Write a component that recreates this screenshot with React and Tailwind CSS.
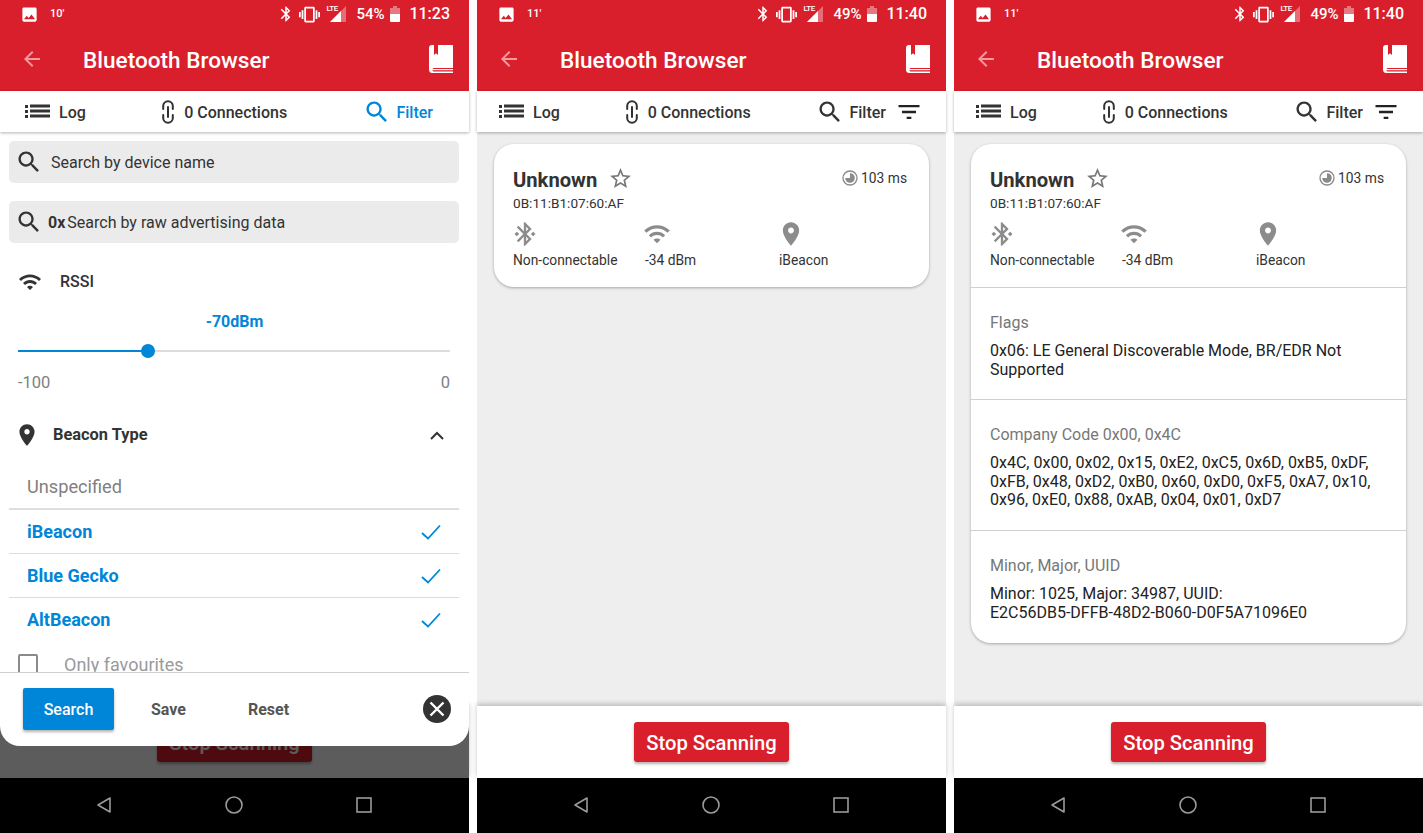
import React from "react";

const P = {
  bt: "M17.71 7.71L12 2h-1v7.59L6.41 5 5 6.41 10.59 12 5 17.59 6.41 19 11 14.41V22h1l5.71-5.71-4.3-4.29 4.3-4.29zM13 5.83l1.88 1.88L13 9.59V5.83zm1.88 10.46L13 18.17v-3.76l1.88 1.88z",
  btDots: "M7 12l-2-2-2 2 2 2 2-2zm10.71-4.29L12 2h-1v7.59L6.41 5 5 6.41 10.59 12 5 17.59 6.41 19 11 14.41V22h1l5.71-5.71-4.3-4.29 4.3-4.29zM13 5.83l1.88 1.88L13 9.59V5.83zm1.88 10.46L13 18.17v-3.76l1.88 1.88zM19 10l-2 2 2 2 2-2-2-2z",
  vibrate: "M0 15h2V9H0v6zm3 2h2V7H3v10zm19-8v6h2V9h-2zm-3 8h2V7h-2v10zM16.5 3h-9C6.67 3 6 3.67 6 4.5v15c0 .83.67 1.5 1.5 1.5h9c.83 0 1.5-.67 1.5-1.5v-15c0-.83-.67-1.5-1.5-1.5zM16 19H8V5h8v14z",
  image: "M21 19V5c0-1.1-.9-2-2-2H5c-1.1 0-2 .9-2 2v14c0 1.1.9 2 2 2h14c1.1 0 2-.9 2-2zM8.5 13.5l2.5 3.01L14.5 12l4.5 6H5l3.5-4.5z",
  back: "M20 11H7.83l5.59-5.59L12 4l-8 8 8 8 1.41-1.41L7.83 13H20v-2z",
  search: "M15.5 14h-.79l-.28-.27C15.41 12.59 16 11.11 16 9.5 16 5.91 13.09 3 9.5 3S3 5.91 3 9.5 5.91 16 9.5 16c1.61 0 3.09-.59 4.23-1.57l.27.28v.79l5 4.99L20.49 19l-4.99-5zm-6 0C7.01 14 5 11.99 5 9.5S7.01 5 9.5 5 14 7.01 14 9.5 11.99 14 9.5 14z",
  wifi: "M1 9l2 2c4.97-4.97 13.03-4.97 18 0l2-2C16.93 2.93 7.08 2.93 1 9zm8 8l3 3 3-3c-1.65-1.66-4.34-1.66-6 0zm-4-4l2 2c2.76-2.76 7.24-2.76 10 0l2-2C15.14 9.14 8.87 9.14 5 13z",
  place: "M12 2C8.13 2 5 5.13 5 9c0 5.25 7 13 7 13s7-7.75 7-13c0-3.87-3.13-7-7-7zm0 9.5c-1.38 0-2.5-1.12-2.5-2.5s1.12-2.5 2.5-2.5 2.5 1.12 2.5 2.5-1.12 2.5-2.5 2.5z",
  star: "M22 9.24l-7.19-.62L12 2 9.19 8.63 2 9.24l5.46 4.73L5.82 21 12 17.27 18.18 21l-1.63-7.03L22 9.24zM12 15.4l-3.76 2.27 1-4.28-3.32-2.88 4.38-.38L12 6.1l1.71 4.04 4.38.38-3.32 2.88 1 4.28L12 15.4z",
  filter: "M10 18h4v-2h-4v2zM3 6v2h18V6H3zm3 7h12v-2H6v2z",
};

const Icon = ({ d, className }) => (
  <svg viewBox="0 0 24 24" fill="currentColor" className={className}>
    <path d={d} />
  </svg>
);

const StatusBar = ({ notif, pct, time }) => (
  <div className="flex h-[28px] items-center pl-[20px] pr-[19px] text-white">
    <Icon d={P.image} className="w-[19px] h-[19px]" />
    <span className="ml-[11px] text-[11px] font-medium">{notif}</span>
    <div className="flex-1" />
    <Icon d={P.bt} className="w-[18px] h-[18px]" />
    <Icon d={P.vibrate} className="ml-[4px] w-[21px] h-[21px]" />
    <div className="relative ml-[6px] w-[20px] h-[18px]">
      <span className="absolute left-0 -top-[1px] text-[8px] font-medium leading-[10px] tracking-[-0.5px]">LTE</span>
      <svg viewBox="0 0 20 18" className="w-[20px] h-[18px]">
        <path d="M20 1V17H4z" fill="#fff" fillOpacity=".35" />
        <path d="M15 6V17H4z" fill="#fff" />
      </svg>
    </div>
    <span className="ml-[10px] text-[15px] font-medium w-[29px] whitespace-nowrap">{pct}</span>
    <svg viewBox="0 0 10 16" className="ml-[5px] w-[10px] h-[16px]">
      <path d="M3 0h4v2h3v6H0V2h3z" fill="#fff" fillOpacity=".4" />
      <path d="M0 8h10v7a1 1 0 0 1-1 1H1a1 1 0 0 1-1-1z" fill="#fff" />
    </svg>
    <span className="ml-[9px] text-[16px] font-medium">{time}</span>
  </div>
);

const BookIcon = () => (
  <svg viewBox="0 0 24 28" className="w-[24px] h-[28px]">
    <path d="M3 0H24V23H4.5a1.8 1.8 0 0 0 0 3.4H24V28H3.5A3.5 3.5 0 0 1 0 24.5V3a3 3 0 0 1 3-3z" fill="#fff" />
    <path d="M5 0H9V10L7 8.3 5 10z" fill="#d91f2b" />
    <rect x="3" y="24" width="21" height="1.2" fill="#fff" />
  </svg>
);

const Header = () => (
  <div className="flex h-[63px] items-center pl-[20px] pr-[16px] pb-[1px]">
    <Icon d={P.back} className="w-[24px] h-[24px] text-[#f39aa1]" />
    <span className="ml-[39px] pt-[3px] text-[22.6px] font-medium text-white">Bluetooth Browser</span>
    <div className="flex-1" />
    <BookIcon />
  </div>
);

const ListIcon = () => (
  <svg viewBox="0 0 25 15" fill="#333" className="w-[25px] h-[15px]">
    <rect x="0" y="1" width="3" height="3" />
    <rect x="0" y="6" width="3" height="3" />
    <rect x="0" y="11" width="3" height="3" />
    <rect x="5" y="0.5" width="20" height="3" />
    <rect x="5" y="5.5" width="20" height="3" />
    <rect x="5" y="10.5" width="20" height="3" />
  </svg>
);

const LinkIcon = () => (
  <svg viewBox="0 0 12 24" fill="none" stroke="#333" strokeWidth="2" strokeLinecap="round" className="w-[12px] h-[24px]">
    <path d="M1.2 9V6a4.8 4.8 0 0 1 9.6 0v3" />
    <path d="M1.2 15v3a4.8 4.8 0 0 0 9.6 0v-3" />
    <path d="M6 7v10" />
  </svg>
);

const TabBar = ({ active }) => (
  <div className={`relative z-10 flex h-[41px] items-center justify-between bg-white shadow-[0_1px_3px_rgba(0,0,0,0.3)] ${active ? "pl-[25px] pr-[36px]" : "pl-[22px] pr-[23px]"}`}>
    <div className="flex items-center gap-[9px]">
      <ListIcon />
      <span className="pt-[2px] text-[16px] font-medium text-[#333]">Log</span>
    </div>
    <div className="flex items-center gap-[10px]">
      <LinkIcon />
      <span className="pt-[2px] text-[16px] font-medium text-[#333]">0 Connections</span>
    </div>
    <div className="flex items-center">
      <Icon d={P.search} className={`w-[28px] h-[28px] ${active ? "text-[#0086d9]" : "text-[#333]"}`} />
      <span className={`ml-[5px] pt-[2px] text-[16px] font-medium ${active ? "text-[#0086d9]" : "text-[#333]"}`}>Filter</span>
      {!active && <Icon d={P.filter} className="ml-[9px] w-[28px] h-[28px] text-[#222]" />}
    </div>
  </div>
);

const ClockIcon = () => (
  <svg viewBox="0 0 16 16" className="mt-[4px] w-[16px] h-[16px]">
    <circle cx="8" cy="8" r="7" fill="none" stroke="#8a8a8a" strokeWidth="1.3" />
    <path d="M8 3.2A4.8 4.8 0 1 1 3.2 8H8z" fill="#8a8a8a" />
  </svg>
);

const Stat = ({ d, label, className }) => (
  <div className={`flex flex-col ${className}`}>
    <Icon d={d} className="-ml-[2px] -mt-[1px] w-[28px] h-[28px] text-[#8c8c8c]" />
    <span className="mt-[3px] text-[13.8px] leading-[18px] text-[#333]">{label}</span>
  </div>
);

const DeviceSummary = () => (
  <div className="h-[143px] pl-[19px] pr-[22px] pt-[22px]">
    <div className="flex items-start">
      <span className="text-[20.2px] leading-[28px] font-bold text-[#333]">Unknown</span>
      <Icon d={P.star} className="ml-[11px] w-[25px] h-[25px] text-[#777]" />
      <div className="flex-1" />
      <ClockIcon />
      <span className="ml-[3px] mt-[4px] text-[13.8px] leading-[17px] text-[#333]">103 ms</span>
    </div>
    <div className="pt-[1px] text-[13.6px] leading-[16px] text-[#333]">0B:11:B1:07:60:AF</div>
    <div className="mt-[10px] flex">
      <Stat d={P.btDots} label="Non-connectable" className="w-[132px]" />
      <Stat d={P.wifi} label="-34 dBm" className="w-[134px]" />
      <Stat d={P.place} label="iBeacon" className="" />
    </div>
  </div>
);

const Detail = ({ title, value, className }) => (
  <div className={`border-t border-[#d0d0d0] px-[19px] ${className}`}>
    <div className="text-[16px] leading-[20px] text-[#777]">{title}</div>
    <div className="mt-[9px] text-[16px] leading-[18.7px] text-[#222]">{value}</div>
  </div>
);

const DeviceCard = ({ expanded }) => (
  <div className="mx-[17px] rounded-[20px] bg-white shadow-[0_1px_3px_rgba(0,0,0,0.3)]">
    <DeviceSummary />
    {expanded && (
      <>
        <Detail className="h-[112px] pt-[25px]" title="Flags" value="0x06: LE General Discoverable Mode, BR/EDR Not Supported" />
        <Detail className="h-[131px] pt-[25px]" title="Company Code 0x00, 0x4C" value="0x4C, 0x00, 0x02, 0x15, 0xE2, 0xC5, 0x6D, 0xB5, 0xDF, 0xFB, 0x48, 0xD2, 0xB0, 0x60, 0xD0, 0xF5, 0xA7, 0x10, 0x96, 0xE0, 0x88, 0xAB, 0x04, 0x01, 0xD7" />
        <Detail className="h-[113px] pt-[25px]" title="Minor, Major, UUID" value={<>Minor: 1025, Major: 34987, UUID:<br />E2C56DB5-DFFB-48D2-B060-D0F5A71096E0</>} />
      </>
    )}
  </div>
);

const BottomBar = () => (
  <div className="relative flex h-[72px] items-start justify-center bg-white pt-[16px] shadow-[0_-2px_5px_rgba(0,0,0,0.22)]">
    <div className="flex h-[40px] w-[155px] items-center justify-center rounded-[3px] bg-[#d91f2b] pt-[2px] text-[20.2px] font-medium text-white shadow-[0_2px_3px_rgba(0,0,0,0.3)]">
      Stop Scanning
    </div>
  </div>
);

const NavBar = () => (
  <div className="relative z-20 flex h-[55px] items-center bg-black pl-[96px] pb-[1px] text-[#9a9a9a]">
    <svg viewBox="0 0 16 18" fill="none" stroke="currentColor" strokeWidth="1.6" className="w-[16px] h-[18px]">
      <path d="M14 2v14L2 9z" strokeLinejoin="round" />
    </svg>
    <svg viewBox="0 0 18 18" fill="none" stroke="currentColor" strokeWidth="1.6" className="ml-[113px] w-[18px] h-[18px]">
      <circle cx="9" cy="9" r="8" />
    </svg>
    <svg viewBox="0 0 16 16" fill="none" stroke="currentColor" strokeWidth="1.6" className="ml-[113px] w-[16px] h-[16px]">
      <rect x="1" y="1" width="14" height="14" />
    </svg>
  </div>
);

const SearchField = ({ prefix, text, className }) => (
  <div className={`ml-[9px] mr-[10px] flex h-[42px] items-center rounded-[5px] bg-[#ebebeb] pl-[6px] text-[#333] ${className}`}>
    <Icon d={P.search} className="w-[28px] h-[28px]" />
    {prefix ? (
      <span className="ml-[5px] pt-[2px] text-[16px] font-bold">{prefix}</span>
    ) : null}
    <span className={`pt-[2px] text-[16px] ${prefix ? "ml-[2px]" : "ml-[8px]"}`}>{text}</span>
  </div>
);

const BeaconRow = ({ label }) => (
  <div className="flex h-[44px] items-center border-t border-[#dcdcdc] pl-[18px] pr-[18px]">
    <span className="flex-1 text-[18px] font-bold text-[#0086d9]">{label}</span>
    <svg viewBox="0 0 20 16" fill="none" stroke="#0086d9" strokeWidth="1.8" className="w-[20px] h-[16px]">
      <path d="M1 9l6 5.5L19 1.5" />
    </svg>
  </div>
);

const FilterSheet = () => (
  <div className="absolute inset-x-0 top-0 flex h-[614px] flex-col rounded-b-[20px] bg-white">
    <div className="h-[540px] overflow-hidden pt-[9px]">
      <SearchField text="Search by device name" />
      <SearchField prefix="0x" text="Search by raw advertising data" className="mt-[18px] h-[41px]" />

      <div className="mt-[24px] flex h-[30px] items-center pl-[18px]">
        <Icon d={P.wifi} className="w-[24px] h-[24px] text-[#333]" />
        <span className="ml-[18px] text-[16px] font-medium text-[#333]">RSSI</span>
      </div>
      <div className="mt-[15px] text-center text-[16px] leading-[20px] font-bold text-[#0086d9]">-70dBm</div>

      {/* slider */}
      <div className="relative ml-[18px] mr-[19px] mt-[18px] h-[2px] bg-[#dcdcdc]">
        <div className="h-[2px] w-[130px] bg-[#0086d9]" />
        <div className="absolute left-[123px] -top-[6px] h-[14px] w-[14px] rounded-full bg-[#0086d9]" />
      </div>
      <div className="ml-[18px] mr-[19px] mt-[21px] flex justify-between text-[16.5px] leading-[20px] text-[#808080]">
        <span>-100</span>
        <span>0</span>
      </div>

      <div className="mt-[20px] flex h-[44px] items-center pl-[14px] pr-[25px]">
        <Icon d={P.place} className="w-[26px] h-[26px] text-[#333]" />
        <span className="ml-[13px] flex-1 text-[16.4px] font-bold text-[#333]">Beacon Type</span>
        <svg viewBox="0 0 14 9" fill="none" stroke="#333" strokeWidth="2" className="w-[14px] h-[9px]">
          <path d="M1 8l6-6 6 6" />
        </svg>
      </div>

      <div className="ml-[9px] mr-[10px] mt-[8px]">
        <div className="flex h-[43px] items-center pl-[18px] pt-[1px] text-[18.2px] text-[#808080]">Unspecified</div>
        <div className="border-t border-[#e0e0e0]">
          <BeaconRow label="iBeacon" />
          <BeaconRow label="Blue Gecko" />
          <BeaconRow label="AltBeacon" />
        </div>
      </div>

      <div className="mt-[13px] flex items-start pl-[18px]">
        <div className="h-[20px] w-[20px] shrink-0 rounded-[2px] border-2 border-[#8a8a8a]" />
        <span className="ml-[26px] text-[18px] leading-[21px] text-[#9a9a9a]">Only favourites</span>
      </div>
    </div>

    <div className="flex flex-1 items-center border-t border-[#cfcfcf] pl-[23px] pr-[18px] pb-[1px]">
      <div className="flex h-[42px] w-[91px] items-center justify-center rounded-[2px] bg-[#0086d9] pt-[1px] text-[16px] font-medium text-white shadow-[0_2px_3px_rgba(0,0,0,0.3)]">
        Search
      </div>
      <span className="ml-[37px] pt-[1px] text-[16px] font-bold text-[#555]">Save</span>
      <span className="ml-[62px] pt-[1px] text-[16px] font-bold text-[#555]">Reset</span>
      <div className="flex-1" />
      <svg viewBox="0 0 28 28" className="w-[28px] h-[28px]">
        <circle cx="14" cy="14" r="14" fill="#333" />
        <path d="M7.5 7.5l13 13M20.5 7.5l-13 13" stroke="#fff" strokeWidth="2.4" />
      </svg>
    </div>
  </div>
);

const Phone = ({ notif, pct, time, filterOpen, expanded }) => (
  <div className="flex h-[833px] w-[469px] shrink-0 flex-col">
    <div className="bg-[#d91f2b]">
      <StatusBar notif={notif} pct={pct} time={time} />
      <Header />
    </div>
    <TabBar active={filterOpen} />
    <div className="relative flex flex-1 flex-col">
      <div className="flex-1 bg-[#eeeeee] pt-[12px]">
        {!filterOpen && <DeviceCard expanded={expanded} />}
      </div>
      <BottomBar />
      {filterOpen && (
        <>
          <div className="absolute inset-0 bg-black/[.64]" />
          <FilterSheet />
        </>
      )}
    </div>
    <NavBar />
  </div>
);

const App = () => {
  return (
    <div className="flex h-[833px] w-[1423px] gap-[8px] overflow-hidden bg-white font-['Roboto',sans-serif]">
      <Phone notif="10'" pct="54%" time="11:23" filterOpen />
      <Phone notif="11'" pct="49%" time="11:40" />
      <Phone notif="11'" pct="49%" time="11:40" expanded />
    </div>
  );
};

export default App;
